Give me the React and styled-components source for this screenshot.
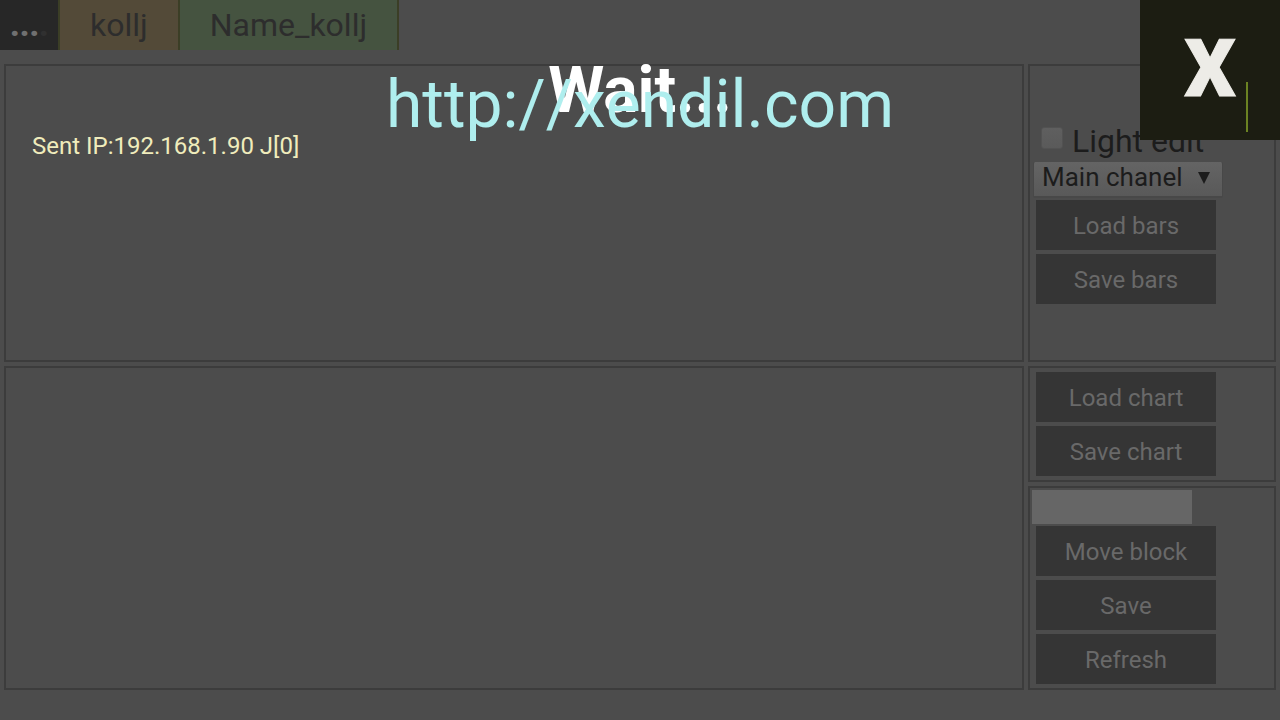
import React from "react";
import styled, { createGlobalStyle } from "styled-components";

const GlobalStyle = createGlobalStyle`
  *, *::before, *::after { box-sizing: border-box; }
  body {
    margin: 0;
    background: #4c4c4c;
    color: #1c1c1c;
    font-family: Roboto, "Liberation Sans", sans-serif;
    font-size: 24px;
  }
  button, input, select { font: inherit; color: inherit; }
`;

const Page = styled.div`
  position: relative;
  min-height: 100vh;
`;

const TabBar = styled.nav`
  display: flex;
  height: 50px;
`;

const Tab = styled.button`
  height: 50px;
  padding: 0 30px;
  border: 0;
  border-right: 2px solid #3b3e26;
  background: ${(p) => p.$bg};
  color: #2d2d2d;
  font-size: 32px;
  line-height: 50px;
`;

const MenuTab = styled(Tab)`
  width: 60px;
  padding: 0 0 0 10px;
  color: #707070;
  font-weight: 900;
  text-align: left;
  line-height: 48px;
`;

const FadedDot = styled.span`
  color: #303030;
`;

const Workspace = styled.main`
  display: grid;
  grid-template-columns: 1fr 248px;
  gap: 4px;
  padding: 14px 4px 30px;
`;

const Column = styled.div`
  display: flex;
  flex-direction: column;
  gap: 4px;
`;

const Panel = styled.section`
  min-height: ${(p) => p.$min || 0}px;
  flex: ${(p) => (p.$grow ? 1 : "none")};
  padding: ${(p) => p.$pad || "0"};
  border: 2px solid #3c3c3c;
`;

const Status = styled.p`
  margin: 0;
  color: #f0ecbc;
  line-height: 28px;
`;

const CheckRow = styled.label`
  display: flex;
  align-items: center;
  gap: 9px;
  height: 36px;
  padding-left: 11px;
  font-size: 32px;
  line-height: 36px;
  white-space: nowrap;
`;

const CheckBox = styled.input`
  appearance: none;
  width: 22px;
  height: 22px;
  margin: 0 0 6px;
  border: 1px solid #525252;
  border-radius: 3px;
  background: linear-gradient(#5f5f5f, #5a5a5a);
`;

const SelectWrap = styled.div`
  position: relative;
  width: 190px;
  margin: 3px 0 0 3px;
`;

const ChannelSelect = styled.select`
  appearance: none;
  display: block;
  width: 100%;
  height: 36px;
  padding: 0 0 4px 8px;
  border: 1px solid #484848;
  border-width: 0 1px 2px;
  border-radius: 2px;
  background: linear-gradient(#646464, #595959);
  font-size: 26px;
  line-height: 30px;
`;

const Arrow = styled.svg`
  position: absolute;
  top: 10px;
  right: 13px;
  pointer-events: none;
`;

const ButtonStack = styled.div`
  display: flex;
  flex-direction: column;
  gap: 4px;
  width: 180px;
  margin: ${(p) => p.$top}px 0 4px 6px;
`;

const ActionButton = styled.button`
  height: 50px;
  padding: 2px 0 0;
  border: 0;
  background: #353535;
  color: #696969;
  line-height: 48px;
`;

const BlockInput = styled.input`
  display: block;
  width: 160px;
  height: 34px;
  margin: 2px 0 0 2px;
  padding: 0 4px;
  border: 0;
  background: #666;
`;

const Overlay = styled.div`
  position: absolute;
  top: 50px;
  left: 0;
  right: 0;
  display: grid;
  justify-items: center;
  pointer-events: none;
  > * { grid-area: 1 / 1; }
`;

const Wait = styled.strong`
  color: #fff;
  font-size: 64px;
  line-height: 82px;
`;

const SiteLink = styled.a`
  padding-top: 15px;
  color: #afeeee;
  font-size: 66px;
  font-kerning: none;
  line-height: 80px;
  text-decoration: none;
  pointer-events: auto;
`;

const Badge = styled.div`
  position: absolute;
  top: 0;
  right: 0;
  display: flex;
  justify-content: center;
  width: 140px;
  height: 140px;
  background: #1c1d12;
  color: #edece7;
  font-size: 80px;
  font-weight: 900;
  line-height: 138px;
  -webkit-text-stroke: 1px #edece7;

  &::after {
    content: "";
    position: absolute;
    right: 32px;
    bottom: 8px;
    width: 2px;
    height: 50px;
    background: #6b8222;
  }
`;

export default function App() {
  return (
    <Page>
      <GlobalStyle />
      <TabBar>
        <MenuTab $bg="#272727" type="button">...<FadedDot>.</FadedDot></MenuTab>
        <Tab $bg="#534a38" type="button">kollj</Tab>
        <Tab $bg="#455340" type="button">Name_kollj</Tab>
      </TabBar>
      <Workspace>
        <Column>
          <Panel $min={298} $pad="66px 26px">
            <Status>Sent IP:192.168.1.90 J[0]</Status>
          </Panel>
          <Panel $grow />
        </Column>
        <Column>
          <Panel $min={298} $pad="57px 0 0">
            <CheckRow>
              <CheckBox type="checkbox" />
              Light edit
            </CheckRow>
            <SelectWrap>
              <ChannelSelect aria-label="Channel">
                <option>Main chanel</option>
              </ChannelSelect>
              <Arrow width="12" height="12" viewBox="0 0 12 12" aria-hidden="true">
                <path d="M0 0H12L6 12Z" fill="#1c1c1c" />
              </Arrow>
            </SelectWrap>
            <ButtonStack $top={2}>
              <ActionButton type="button">Load bars</ActionButton>
              <ActionButton type="button">Save bars</ActionButton>
            </ButtonStack>
          </Panel>
          <Panel>
            <ButtonStack $top={4}>
              <ActionButton type="button">Load chart</ActionButton>
              <ActionButton type="button">Save chart</ActionButton>
            </ButtonStack>
          </Panel>
          <Panel>
            <BlockInput type="text" aria-label="Block" />
            <ButtonStack $top={2}>
              <ActionButton type="button">Move block</ActionButton>
              <ActionButton type="button">Save</ActionButton>
              <ActionButton type="button">Refresh</ActionButton>
            </ButtonStack>
          </Panel>
        </Column>
      </Workspace>
      <Overlay>
        <Wait>Wait...</Wait>
        <SiteLink href="http://xendil.com">http://xendil.com</SiteLink>
      </Overlay>
      <Badge>X</Badge>
    </Page>
  );
}
